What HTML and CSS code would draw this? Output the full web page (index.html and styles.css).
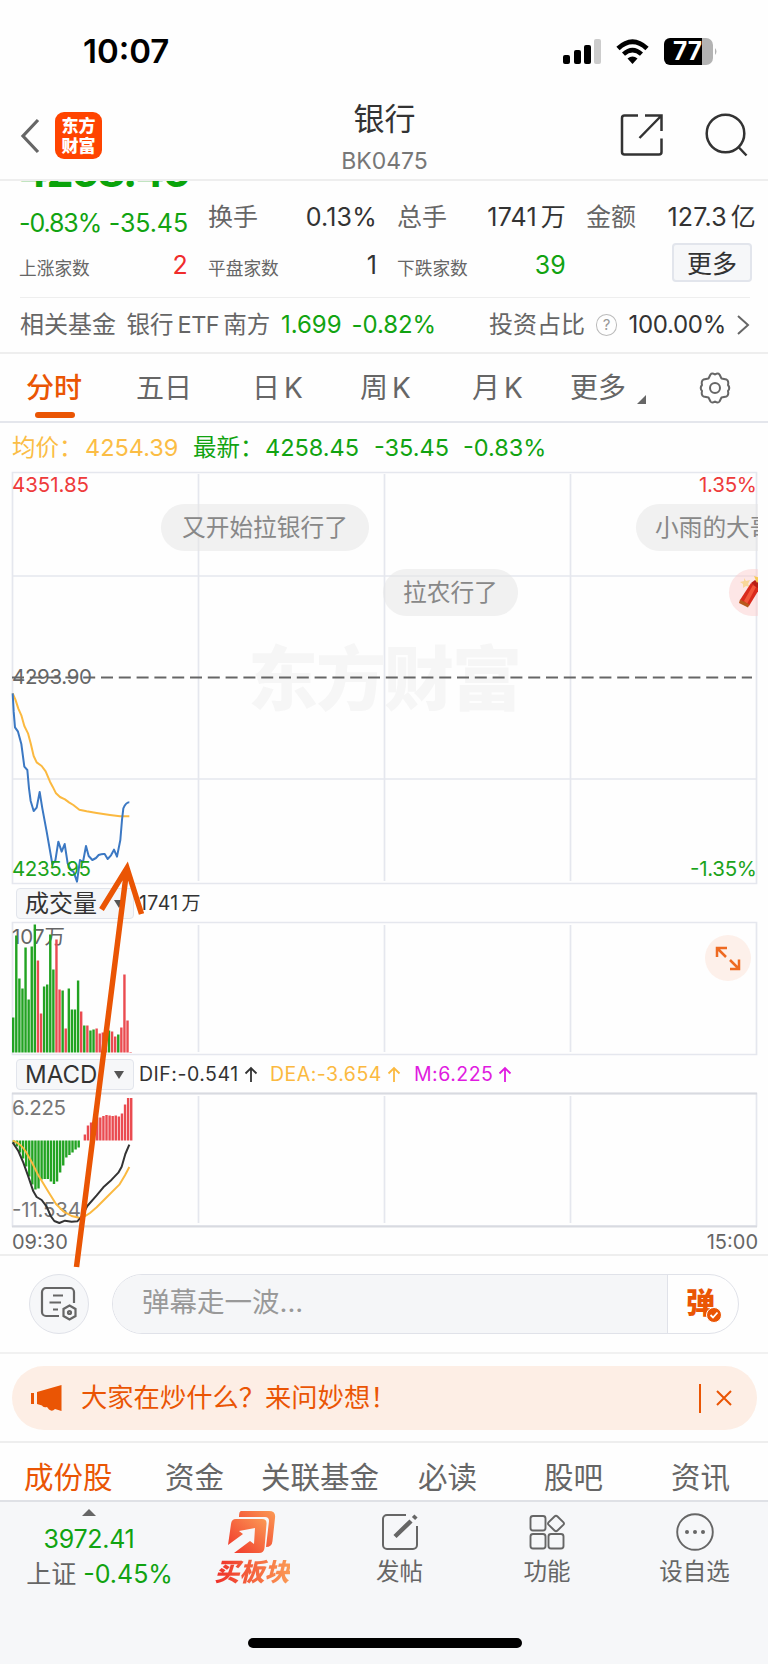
FILE: index.html
```html
<!DOCTYPE html>
<html lang="zh-CN">
<head>
  <meta charset="UTF-8" />
  <meta name="viewport" content="width=device-width, initial-scale=1.0">
  <title>银行 BK0475</title>
  <link rel="stylesheet" href="styles.css">
</head>
<body>

  <!-- 状态栏 -->
  <div class="status-bar">
    <span class="clock">10:07</span>
    <svg class="status-icons" width="160" height="32" viewBox="0 0 160 32">
      <rect x="2" y="19" width="7" height="9" rx="2"/>
      <rect x="13" y="14" width="7" height="14" rx="2"/>
      <rect x="23" y="9" width="7" height="19" rx="2"/>
      <rect x="33" y="3" width="7" height="25" rx="2" fill="#ccc"/>
      <path d="M57 12.5Q71.500 -1 86 12.500" fill="none" stroke="#000" stroke-width="4.800"/>
      <path d="M62.500 18.200Q71.500 10 80.500 18.200" fill="none" stroke="#000" stroke-width="4.500"/>
      <path d="M66.500 22.500Q71.500 18.500 76.500 22.500L71.500 28Z"/>
      <path d="M109 2h32v27h-32a6 6 0 0 1-6-6V8a6 6 0 0 1 6-6z"/>
      <path d="M141 2h4a7 7 0 0 1 7 7v13a7 7 0 0 1-7 7h-4z" fill="#b3b3b3"/>
      <path d="M154 12q3 3.500 0 7z" fill="#b3b3b3"/>
      <text x="112" y="24" textLength="29" lengthAdjust="spacingAndGlyphs" class="battery-text">77</text>
    </svg>
  </div>

  <!-- 标题 -->
  <header class="header">
    <div class="header-left">
      <svg width="20" height="36" viewBox="0 0 20 36"><path d="M18 2L3 18L18 34" fill="none" stroke="#666" stroke-width="3.2"/></svg>
      <div class="logo"><span>东方</span><span>财富</span></div>
    </div>
    <div class="header-title">
      <h1>银行</h1>
      <p>BK0475</p>
    </div>
    <div class="header-right">
      <svg width="46" height="46" viewBox="0 0 46 46" fill="none" stroke="#333" stroke-width="2.500">
        <path d="M19 3.500H5.500a2.500 2.500 0 0 0-2.500 2.500V40a2.500 2.500 0 0 0 2.500 2.500H40a2.500 2.500 0 0 0 2.500-2.500V26.500M26 3.500H42.500V19M42 4L20.500 26"/>
      </svg>
      <svg width="46" height="46" viewBox="0 0 46 46" fill="none" stroke="#333" stroke-width="2.500">
        <circle cx="22.500" cy="21.500" r="18.800"/><path d="M35 34.500L43.500 43.500"/>
      </svg>
    </div>
  </header>

  <!-- 行情数据 -->
  <section class="quote">
    <div class="col col-price">
      <div class="big-price"><span>4258.45</span></div>
      <div class="line change green"><span class="change-pct">-0.83%</span><span>-35.45</span></div>
      <div class="line sub"><em>上涨家数</em><b class="red">2</b></div>
    </div>
    <div class="col">
      <div class="line"><em>换手</em><b>0.13%</b></div>
      <div class="line sub"><em>平盘家数</em><b>1</b></div>
    </div>
    <div class="col">
      <div class="line"><em>总手</em><b>1741<i>万</i></b></div>
      <div class="line sub"><em>下跌家数</em><b class="green">39</b></div>
    </div>
    <div class="col">
      <div class="line"><em>金额</em><b>127.3<i>亿</i></b></div>
      <div class="line sub line-btn"><button class="more-btn">更多</button></div>
    </div>
  </section>

  <section class="fund">
    <span class="fund-label">相关基金</span>
    <span class="fund-name">银行<i>ETF</i>南方</span>
    <span class="green fund-price">1.699</span>
    <span class="green fund-pct">-0.82%</span>
    <span class="fund-ratio">投资占比</span>
    <span class="help">?</span>
    <span class="fund-total">100.00%</span>
    <svg width="14" height="22" viewBox="0 0 14 22"><path d="M2 2L12 11L2 20" fill="none" stroke="#666" stroke-width="2"/></svg>
  </section>

  <!-- 周期 -->
  <nav class="period">
    <a class="active">分时</a>
    <a>五日</a>
    <a>日<i>K</i></a>
    <a>周<i>K</i></a>
    <a>月<i>K</i></a>
    <a>更多</a>
    <svg class="corner" width="9" height="9" viewBox="0 0 9 9"><path d="M9 0V9H0z" fill="#666"/></svg>
    <svg class="gear" width="34" height="34" viewBox="0 0 34 34" fill="none" stroke="#666" stroke-width="2" stroke-linejoin="round">
      <path d="M12.500 3.500Q14 1.500 17 3.500Q20 1.500 21.500 3.500L23.500 7.500L28.500 8.500Q31 10 30 14Q32.500 17 30 20Q31 24 28.500 25.500L23.500 26.500L21.500 30.500Q20 32.500 17 30.500Q14 32.500 12.500 30.500L10.500 26.500L5.500 25.500Q3 24 4 20Q1.500 17 4 14Q3 10 5.500 8.500L10.500 7.500Z"/>
      <circle cx="17" cy="17" r="5"/>
    </svg>
  </nav>

  <div class="legend">
    <span class="yellow legend-avg">均价：</span><span class="yellow legend-avg-num">4254.39</span>
    <span class="green legend-now">最新：</span><span class="green legend-now-num">4258.45</span>
    <span class="green legend-diff">-35.45</span>
    <span class="green legend-pct">-0.83%</span>
  </div>

  <!-- 图表 -->
  <section class="charts">
    <svg class="chart" width="768" height="415" viewBox="0 0 768 415">
      <text x="248" y="234" textLength="274" class="watermark">东方财富</text>
      <path class="grid" d="M12.500 1.500H756.500V412.500H12.500ZM198.500 3V410M384.500 3V410M570.500 3V410M12 105H757M12 308H757"/>
      <path d="M12 206.500H752" stroke="#666" stroke-width="2" stroke-dasharray="12 5.800"/>
      <g transform="translate(0 169) scale(.33333)" fill="none" stroke-width="6" stroke-linejoin="round">
        <path stroke="#fbb940" d="M38 160L46 178L55 206L64 226L73 258L84 280L92 310L101 348L110 367L125 378L137 394L150 425L158 440L168 460L180 471L195 478L207 487L220 495L238 509L260 514L290 519L330 525L360 529H388"/>
        <path stroke="#3b78c3" d="M38 160L41 215L45 262L54 275L64 312L73 380L82 390L87 445L92 483L101 513L110 503L119 456L127 505L140 575L157 672L166 662L175 605L185 635L194 612L203 670L212 690L221 696L231 725L240 660L249 666L258 618L266 648L277 660L288 654L296 645Q306 641 314 642L323 657L333 646L342 629L351 650L361 600L366 540L370 505Q378 487 388 487"/>
      </g>
      <g class="axis">
        <text x="12" y="20.500" textLength="77" fill="#ee3b3b">4351.85</text>
        <text x="699" y="20.500" textLength="58" fill="#ee3b3b">1.35%</text>
        <text x="12" y="213" textLength="80" fill="#666">4293.90</text>
        <text x="12" y="404.500" textLength="79" fill="#1ba31b">4235.95</text>
        <text x="690" y="404.500" textLength="67" fill="#1ba31b">-1.35%</text>
      </g>
    </svg>

    <!-- 弹幕 -->
    <div class="danmu-layer">
      <span class="danmu danmu-1">又开始拉银行了</span>
      <span class="danmu danmu-2">拉农行了</span>
      <span class="danmu danmu-3">小雨的大哥</span>
      <span class="danmu danmu-gift">
        <svg width="30" height="34" viewBox="0 0 30 34">
          <path d="M5 2l2 3 4-1-2 4 2 3-4-1-3 2 0-4-3-2 4-1z" fill="#f8d79a"/>
          <path d="M1 24L12 7L21 12L10 30Z" fill="#d92a1c"/>
          <path d="M5 25L14 9L17 11L8 28Z" fill="#f2553a"/>
          <path d="M1 23.500L10.500 28.500L9 31.500L0 27Z" fill="#b8591b"/>
          <path d="M12 7L16 4L22 9L20 13Z" fill="#b81d14"/>
          <path d="M15 0l6 2-3 5z" fill="#f7c955"/>
        </svg>
      </span>
    </div>

    <div class="indicator">
      <span class="select">成交量<i></i></span>
      <span class="vol-now">1741<em>万</em></span>
    </div>
    <svg class="chart" width="768" height="136" viewBox="0 0 768 136">
      <path class="grid" d="M12.500 1.500H756.500V133.500H12.500ZM198.500 4V131M384.500 4V131M570.500 4V131"/>
      <text x="12" y="22.500" textLength="53" class="axis" fill="#666">107万</text>
      <g id="volumeBars"></g>
      <circle cx="728" cy="37" r="23" fill="#fdf0ea"/>
      <path d="M717 36V27H727M717.500 27.500L726 36M730 48H739V38.500M738.500 47.500L730 39" fill="none" stroke="#ee6a22" stroke-width="2.500"/>
    </svg>

    <div class="indicator">
      <span class="select">MACD<i></i></span>
      <span class="dif">DIF:-0.541 <svg width="14" height="17" viewBox="0 0 14 17"><path d="M7 16V2M1.500 7.500L7 2L12.500 7.500"/></svg></span>
      <span class="dea">DEA:-3.654 <svg width="14" height="17" viewBox="0 0 14 17"><path d="M7 16V2M1.500 7.500L7 2L12.500 7.500"/></svg></span>
      <span class="macd">M:6.225 <svg width="14" height="17" viewBox="0 0 14 17"><path d="M7 16V2M1.500 7.500L7 2L12.500 7.500"/></svg></span>
    </div>
    <svg class="chart" width="768" height="137" viewBox="0 0 768 137">
      <path class="grid" d="M12.500 1.500H756.500V134H12.500ZM198.500 4V131M384.500 4V131M570.500 4V131"/>
      <path d="M12 1.500H757M12 134.500H757" stroke="#d8dae0" stroke-width="2"/>
      <g id="macdBars"></g>
      <g class="axis" fill="#777">
        <text x="12" y="23" textLength="54">6.225</text>
        <text x="12" y="125" textLength="69">-11.534</text>
      </g>
      <g transform="translate(0 -42) scale(.33333)" fill="none" stroke-width="6" stroke-linejoin="round">
        <path stroke="#fbb940" d="M38 272Q62 280 78 306L95 336L115 376L145 425L168 462L190 484L215 498L240 504Q256 500 270 489L290 472L320 442L358 404L375 376L388 351"/>
        <path stroke="#333" d="M38 277L55 303L70 338L85 380L100 424L110 441L125 450L140 470L152 498L163 513L178 519L195 512L215 515L232 514L245 500L262 468L290 436L310 412L335 389L355 368L365 350L376 312L388 284"/>
      </g>
    </svg>
    <div class="times"><span>09:30</span><span>15:00</span></div>

    <!-- 箭头标注 -->
    <svg class="arrow" width="160" height="800" viewBox="0 0 160 800">
      <path d="M76.500 796L127 397M101.500 438.500L127 397L141.500 443" fill="none" stroke="#ea5504" stroke-width="5.500"/>
    </svg>
  </section>

  <!-- 弹幕输入 -->
  <section class="comment">
    <div class="comment-set">
      <svg width="38" height="36" viewBox="0 0 38 36" fill="none" stroke="#666" stroke-width="2.200">
        <path d="M19 30H6a4 4 0 0 1-4-4V6a4 4 0 0 1 4-4H30a4 4 0 0 1 4 4V17M13 9.500H23M9.500 16.500H21M13 23.500H18"/>
        <path d="M29.500 19.500L35.500 23V30L29.500 33.500L23.500 30V23Z"/><circle cx="29.500" cy="26.500" r="1.500"/>
      </svg>
    </div>
    <div class="comment-box">
      <span class="comment-input">弹幕走一波...</span>
      <span class="comment-send">弹<svg width="16" height="16" viewBox="0 0 16 16"><circle cx="8" cy="8" r="7.500" fill="#ea5504" stroke="#fff"/><path d="M4.500 8L7 10.500L11.500 5.500" fill="none" stroke="#fff" stroke-width="1.800"/></svg></span>
    </div>
  </section>

  <section class="notice-wrap">
    <div class="notice">
      <svg width="32" height="28" viewBox="0 0 32 28" fill="#ea5504">
        <rect x="0" y="9" width="3" height="11"/>
        <path d="M6 8L30.500 1V27L24 25Q21 28 18 25.500L16 23Q12 24 11 21.500L6 20Z"/>
      </svg>
      <p>大家在炒什么？来问妙想！</p>
      <span class="notice-line"></span>
      <svg width="18" height="18" viewBox="0 0 18 18"><path d="M2 2L16 16M16 2L2 16" stroke="#ea5504" stroke-width="2"/></svg>
    </div>
  </section>

  <nav class="tabs">
    <a class="active">成份股</a>
    <a>资金</a>
    <a>关联基金</a>
    <a>必读</a>
    <a>股吧</a>
    <a>资讯</a>
  </nav>

  <!-- 底部栏 -->
  <footer class="bottom">
    <div class="index">
      <svg width="14" height="7" viewBox="0 0 14 7"><path d="M7 0L14 7H0z" fill="#666"/></svg>
      <span class="index-num">3972.41</span>
      <span class="index-row">上证<b>-0.45%</b></span>
    </div>
    <div class="bottom-item buy">
      <svg width="48" height="44" viewBox="0 0 48 44">
        <defs><linearGradient id="hot" x1="0" y1="1" x2="1" y2="0"><stop offset="0" stop-color="#f03228"/><stop offset="1" stop-color="#fb9a55"/></linearGradient></defs>
        <path d="M13 1H41Q48 1 47 8L44.500 31Q44 37 38 37L41 11Q41 7 37 7H11Q11 1 13 1Z" fill="url(#hot)"/>
        <path d="M8 9H34Q39 9 38.500 14L36.500 38Q36 43 31 43H6L22 31L26 34L27 18L11 21L15 24L0 35L3 14Q3.500 9 8 9Z" fill="url(#hot)"/>
      </svg>
      <span>买板块</span>
    </div>
    <div class="bottom-item">
      <svg width="38" height="38" viewBox="0 0 38 38" fill="none" stroke="#666" stroke-width="2">
        <path d="M25 2H6a4 4 0 0 0-4 4V32a4 4 0 0 0 4 4H32a4 4 0 0 0 4-4V13"/>
        <path d="M14 23.500L30 8M32.500 5.500L35 3" stroke-width="4.500"/>
      </svg>
      <span>发帖</span>
    </div>
    <div class="bottom-item">
      <svg width="38" height="38" viewBox="0 0 38 38" fill="none" stroke="#666" stroke-width="1.900">
        <rect x="2.500" y="3" width="15" height="14.500" rx="2.500"/><rect x="2.500" y="21" width="15" height="14.500" rx="2.500"/><rect x="20.500" y="21" width="15" height="14.500" rx="2.500"/>
        <path d="M26.500 3.500Q28 2 29.500 3.500L35.500 9.300Q36.500 10.500 35.500 11.700L29.500 17.500Q28 19 26.500 17.500L20.500 11.700Q19.500 10.500 20.500 9.300Z"/>
      </svg>
      <span>功能</span>
    </div>
    <div class="bottom-item">
      <svg width="38" height="38" viewBox="0 0 38 38">
        <circle cx="19" cy="19" r="17.800" fill="none" stroke="#666" stroke-width="1.900"/>
        <g fill="#666"><circle cx="11" cy="19" r="2"/><circle cx="19" cy="19" r="2"/><circle cx="27" cy="19" r="2"/></g>
      </svg>
      <span>设自选</span>
    </div>
    <div class="home-bar"></div>
  </footer>

  <script>
    const STEP = 3.09;
    const RED = '#ea4b50';
    const GREEN = '#22a322';

    // 每根柱: 高度, 正数为涨(红), 负数为跌(绿)
    const volume = [-35, -117, -74, -64, -105, -53, -106, -128, 92, 39, -66, -68, -118, -83, 113, 63, -62, 24, -64, -43, -43, -72, 41, -27, 27, -22, -23, 24, 19, 20, 22, -22, 21, 16, -18, 25, 78, 32, 0.5];
    const macd = [-3, -6, -12, -18, -26, -36, -44, -49, -48, -39, -38.5, -38.5, -41, -43.5, -41, -32, -25, -17, -14.5, -12, -9, -7, 0, 6, 15, 18, 21, 23, 23, 24.5, 25.5, 25, 24.5, 25, 24, 27, 36, 42.5, 42.5];

    function drawBars(id, data, draw) {
      const g = document.getElementById(id);
      data.forEach((v, i) => {
        const rect = document.createElementNS('http://www.w3.org/2000/svg', 'rect');
        const box = draw(v, i);
        rect.setAttribute('x', box.x);
        rect.setAttribute('y', box.y);
        rect.setAttribute('width', 2.4);
        rect.setAttribute('height', Math.abs(v));
        rect.setAttribute('fill', v > 0 ? RED : GREEN);
        g.appendChild(rect);
      });
    }

    drawBars('volumeBars', volume, (v, i) => ({ x: 12 + i * STEP, y: 131.5 - Math.abs(v) }));
    drawBars('macdBars', macd, (v, i) => ({ x: 12.6 + i * STEP, y: v > 0 ? 48.5 - v : 48.5 }));
  </script>
</body>
</html>
```
FILE: styles.css
```css
* {
  box-sizing: border-box;
}

body {
  margin: 0;
  width: 768px;
  height: 1664px;
  overflow: hidden;
  background-color: #fefefe;
  color: #333;
  font-family: Inter, "Noto Sans CJK SC", sans-serif;
  font-size: 24px;
  line-height: 1.2;
  font-weight: 400;
}

h1, p {
  margin: 0;
  font-weight: 400;
}

em, i, b {
  font-style: normal;
  font-weight: 400;
}

svg {
  display: block;
  flex-shrink: 0;
}

span, a {
  white-space: nowrap;
}

.green { color: #11a311 !important; }
.red { color: #f02c2c !important; }
.yellow { color: #fbbd45; }

.status-bar {
  height: 100px;
  padding: 31px 47px 0 83px;
  display: flex;
  justify-content: space-between;
}

.clock {
  font-size: 33px;
  line-height: 41px;
  font-weight: 600;
  color: #000;
}

.status-icons {
  margin-top: 5px;
}

.battery-text {
  font-size: 25px;
  font-weight: 700;
  fill: #fff;
}

.header {
  height: 81px;
  padding: 0 19px 0 20px;
  display: grid;
  grid-template-columns: 1fr 1fr 1fr;
  border-bottom: 2px solid #eee;
}

.header-left {
  display: flex;
  align-items: center;
  gap: 15px;
  height: 71px;
}

.logo {
  width: 47px;
  height: 47px;
  border-radius: 9px;
  background-color: #ff4400;
  color: #fff;
  display: flex;
  flex-direction: column;
  justify-content: center;
  align-items: center;
  font-size: 17px;
  line-height: 20px;
  font-weight: 900;
}

.logo span {
  height: 20px;
}

.header-title {
  text-align: center;
}

.header-title h1 {
  font-size: 31px;
  line-height: 38px;
}

.header-title p {
  margin-top: 9px;
  font-size: 23px;
  line-height: 28px;
  color: #777;
}

.header-right {
  display: flex;
  justify-content: flex-end;
  gap: 38px;
  padding-top: 12px;
}

.quote {
  height: 116px;
  margin: 0 12px 0 19px;
  display: grid;
  grid-template-columns: 169px 169px 169px 170px;
  column-gap: 20px;
}

.col {
  padding-top: 21px;
}

.col-price {
  padding-top: 0;
}

.big-price {
  height: 26px;
  margin-right: -10px;
  overflow: hidden;
}

.big-price span {
  display: block;
  margin-top: -36px;
  font-size: 43px;
  line-height: 52px;
  letter-spacing: -1.7px;
  font-weight: 700;
  color: #0aa30a;
}

.line {
  height: 30px;
  display: flex;
  justify-content: space-between;
  align-items: center;
  font-size: 25px;
  line-height: 30px;
}

.line.change {
  height: 32px;
  letter-spacing: -0.1px;
}

.line .change-pct {
  letter-spacing: -1.1px;
}

.line em {
  color: #666;
}

.line b {
  letter-spacing: 0.2px;
}

.line b i {
  margin-left: 4px;
}

.line.sub {
  margin-top: 18px;
}

.col-price .line.sub {
  margin-top: 11px;
}

.line.sub em {
  font-size: 17.7px;
  padding-top: 7px;
}

.line-btn {
  justify-content: flex-end;
}

.col .line-btn {
  margin-top: 15px;
  padding-right: 4px;
}

.more-btn {
  width: 80px;
  height: 39px;
  padding: 0;
  border: 2px solid #e2e5ec;
  border-radius: 4px;
  background-color: #f6f7f9;
  color: #333;
  font: 25px "Noto Sans CJK SC", sans-serif;
  line-height: 33px;
}

.fund {
  height: 55px;
  margin-left: 20px;
  margin-right: 18px;
  border-top: 1.5px solid #eee;
  display: flex;
  align-items: center;
  color: #666;
  font-size: 24px;
}

.fund-label { width: 107px; }
.fund-name { width: 155px; font-size: 23.5px; }
.fund-name i { margin: 0 4px; letter-spacing: -0.5px; }
.fund-price { width: 71px; letter-spacing: 0; }
.fund-pct { width: 138px; letter-spacing: -0.1px; }
.fund-ratio { width: 107px; }
.fund-total { width: 108px; color: #333; letter-spacing: -0.3px; }

.help {
  width: 22px;
  height: 22px;
  margin-right: 11px;
  border: 1.5px solid #bbb;
  border-radius: 50%;
  font-size: 15px;
  line-height: 19px;
  text-align: center;
  color: #999;
}

.period {
  height: 71px;
  padding-left: 26px;
  border-top: 2px solid #eee;
  border-bottom: 2px solid #e4e6ec;
  display: grid;
  grid-template-columns: 110px 116px 108px 112px 98px 67px 69px 40px;
  font-size: 28px;
  color: #666;
}

.period a {
  line-height: 69px;
}

.period i {
  margin-left: 4px;
}

.period .active {
  position: relative;
  color: #ea5504;
  font-weight: 500;
}

.period .active::after {
  content: "";
  position: absolute;
  left: 9px;
  bottom: 5px;
  width: 40px;
  height: 6px;
  border-radius: 3px;
  background-color: #ea5504;
}

.corner {
  margin-top: 41px;
}

.gear {
  margin-top: 17px;
  margin-left: -8px;
}

.legend {
  height: 48px;
  padding-left: 12px;
  padding-top: 2px;
  display: flex;
  align-items: center;
  font-size: 23.5px;
}

.legend-avg { width: 73px; }
.legend-avg-num { width: 108px; }
.legend-now { width: 72px; }
.legend-now-num { width: 109px; }
.legend-diff { width: 89px; }

.charts {
  position: relative;
  border-bottom: 2px solid #eee;
}

.grid {
  fill: none;
  stroke: #e5e7ee;
  stroke-width: 1.7;
}

.watermark {
  font-size: 70px;
  font-weight: 900;
  fill: #f6f6f6;
}

.axis {
  font-size: 20.5px;
}

.danmu-layer {
  position: absolute;
  top: 0;
  left: 12px;
  width: 746px;
  height: 415px;
  overflow: hidden;
}

.danmu {
  position: absolute;
  height: 47px;
  padding: 0 21px;
  border-radius: 24px;
  background-color: rgba(230, 230, 230, 0.55);
  color: #888;
  font-size: 23.7px;
  line-height: 47px;
}

.danmu-1 { left: 149px; top: 33px; }
.danmu-2 { left: 371px; top: 98px; padding: 0 20px; }
.danmu-3 { left: 624px; top: 33px; padding: 0 19px; }

.danmu-gift {
  left: 717px;
  top: 98px;
  padding: 7px 10px;
  background-color: rgba(252, 205, 205, 0.5);
}

.indicator {
  height: 35px;
  padding-left: 16px;
  display: flex;
  align-items: center;
  font-size: 19.5px;
}

.select {
  width: 118px;
  height: 31px;
  margin-right: 5px;
  padding: 0 9px 0 8px;
  border: 1.5px solid #e2e5ec;
  border-radius: 4px;
  background-color: #f6f7f9;
  display: flex;
  align-items: center;
  justify-content: space-between;
  font-size: 24px;
  line-height: 28px;
}

.select i {
  border: 5px solid transparent;
  border-top: 8px solid #555;
  border-bottom: 0;
}

.vol-now {
  letter-spacing: 0.4px;
}

.vol-now em {
  margin-left: 3px;
  font-size: 19px;
}

.dif, .dea, .macd {
  display: flex;
  align-items: center;
  gap: 5px;
  letter-spacing: 0.5px;
}

.dif svg, .dea svg, .macd svg {
  fill: none;
  stroke: currentColor;
  stroke-width: 1.8;
}

.dif { width: 131px; }
.dea { width: 144px; color: #fbb940; }
.macd { color: #e01be0; }

.times {
  height: 25px;
  padding: 0 10px 0 12px;
  display: flex;
  justify-content: space-between;
  font-size: 20px;
  line-height: 26px;
  color: #666;
}

.arrow {
  position: absolute;
  left: 0;
  top: 0;
}

.comment {
  height: 98px;
  padding: 18px 29px 0;
  display: flex;
  gap: 23px;
  border-bottom: 2px solid #f1f1f1;
}

.comment-set {
  width: 60px;
  height: 60px;
  border: 1.5px solid #e0e2e9;
  border-radius: 50%;
  background-color: #f6f7f9;
  display: flex;
  align-items: center;
  justify-content: center;
}

.comment-box {
  flex: 1;
  height: 60px;
  border: 1.5px solid #e0e2e9;
  border-radius: 30px;
  overflow: hidden;
  display: flex;
}

.comment-input {
  flex: 1;
  padding-left: 29px;
  background-color: #f5f6f8;
  border-right: 1.5px solid #e0e2e9;
  color: #999;
  font-size: 27.5px;
  line-height: 54px;
}

.comment-send {
  position: relative;
  width: 70px;
  padding-left: 18px;
  font-size: 29px;
  line-height: 57px;
  font-weight: 900;
  color: #ea5504;
}

.comment-send svg {
  position: absolute;
  left: 38px;
  top: 32px;
}

.notice-wrap {
  height: 89px;
  padding: 12px 11px 0 12px;
  border-bottom: 2px solid #eee;
}

.notice {
  height: 64px;
  padding: 0 24px 0 19px;
  border-radius: 32px;
  background-color: #fdeee5;
  color: #ea5504;
  display: flex;
  align-items: center;
}

.notice p {
  flex: 1;
  margin-left: 18px;
  font-size: 26.3px;
  white-space: nowrap;
}

.notice-line {
  width: 2px;
  height: 29px;
  margin-right: 14px;
  background-color: #ea5504;
}

.tabs {
  height: 59px;
  padding-left: 24px;
  border-bottom: 2px solid #dfe1e6;
  display: grid;
  grid-template-columns: 141px 96px 157px 126px 127px 80px;
  font-size: 29.5px;
  line-height: 68px;
  color: #666;
}

.tabs .active {
  color: #ea5504;
}

.bottom {
  height: 163px;
  background-color: #f6f7f9;
  display: grid;
  grid-template-columns: 178px 148px 147px 148px 147px;
  grid-template-rows: 136px 27px;
  color: #666;
}

.index {
  padding-top: 7px;
  display: flex;
  flex-direction: column;
  align-items: center;
}

.index-num {
  margin-top: 7px;
  font-size: 25px;
  line-height: 32px;
  letter-spacing: -0.3px;
  color: #11a311;
}

.index-row {
  margin-left: 21px;
  font-size: 25px;
  line-height: 38px;
}

.index-row b {
  margin-left: 7px;
  color: #11a311;
}

.bottom-item {
  padding-top: 11px;
  display: flex;
  flex-direction: column;
  align-items: center;
  font-size: 23.5px;
  line-height: 41px;
}

.buy {
  padding-top: 8px;
}

.buy span {
  font-size: 25px;
  line-height: 37px;
  font-style: italic;
  font-weight: 900;
  background: linear-gradient(90deg, #ee2e28, #fb9a55);
  -webkit-background-clip: text;
  background-clip: text;
  color: transparent;
}

.home-bar {
  grid-column: 1 / 6;
  width: 274px;
  height: 10px;
  margin-left: 248px;
  border-radius: 5px;
  background-color: #000;
}
```
